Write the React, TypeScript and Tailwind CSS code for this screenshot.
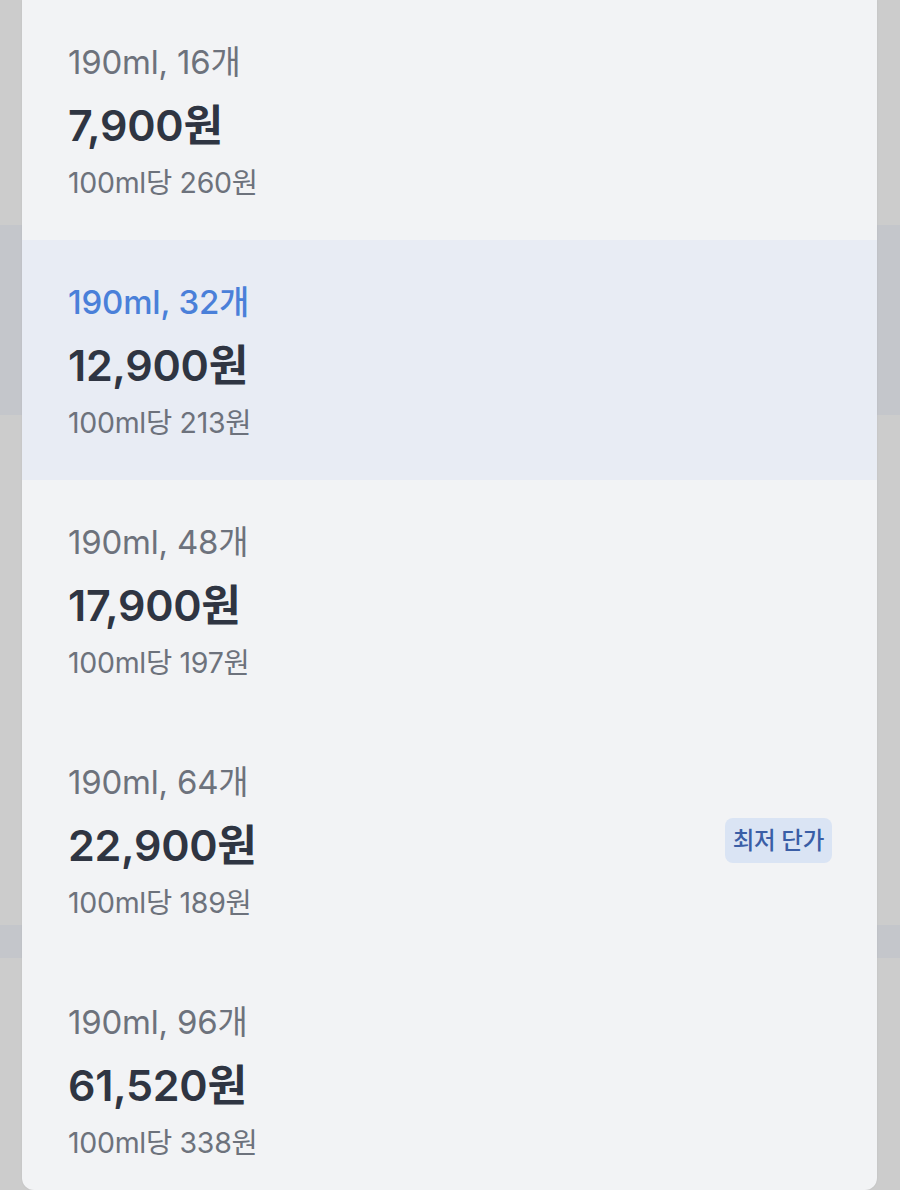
const options = [
  { label: "190ml, 16개", price: "7,900원", unit: "100ml당 260원" },
  { label: "190ml, 32개", price: "12,900원", unit: "100ml당 213원", selected: true },
  { label: "190ml, 48개", price: "17,900원", unit: "100ml당 197원" },
  { label: "190ml, 64개", price: "22,900원", unit: "100ml당 189원", badge: "최저 단가" },
  { label: "190ml, 96개", price: "61,520원", unit: "100ml당 338원" },
];

export default function App() {
  return (
    <div
      className="relative h-[1190px] w-[900px] overflow-hidden bg-[#cccccc]"
      style={{ fontFamily: 'Inter, "Noto Sans CJK KR", sans-serif' }}
    >
      {/* dimmed page behind the sheet */}
      <div className="flex flex-col">
        <div className="h-[225px]" />
        <div className="h-[190px] bg-[#c4c6cb]" />
        <div className="h-[510px]" />
        <div className="h-[33px] bg-[#c4c6cb]" />
      </div>

      {/* option sheet */}
      <div className="absolute left-[22px] top-0 h-[1190px] w-[855px] overflow-hidden rounded-b-[12px] bg-[#f2f3f5] shadow-[0_0_2px_rgba(0,0,0,0.08)]">
        {options.map((o) => (
          <div
            key={o.label}
            className={`flex h-[240px] items-center justify-between pl-[46px] pr-[45px] ${
              o.selected ? "bg-[#e8ecf4]" : ""
            }`}
          >
            <div className="flex flex-col pt-[3px]">
              <div
                className={`text-[33px] leading-[40px] tracking-[-0.2px] ${
                  o.selected ? "font-medium text-[#4a80d9]" : "text-[#6d727c]"
                }`}
              >
                {o.label}
              </div>
              <div className="mt-[15px] text-[43px] font-semibold leading-[56px] tracking-[-0.3px] text-[#2f3542]">
                {o.price}
              </div>
              <div className="mt-[12px] text-[28.5px] leading-[36px] tracking-[-0.3px] text-[#6d727c]">
                {o.unit}
              </div>
            </div>
            {o.badge && (
              <div className="rounded-[8px] bg-[#dae4f4] px-[8px] py-[7px] text-[23.5px] font-medium leading-[31px] tracking-[-0.3px] text-[#3a5ea6]">
                {o.badge}
              </div>
            )}
          </div>
        ))}
      </div>
    </div>
  );
}
